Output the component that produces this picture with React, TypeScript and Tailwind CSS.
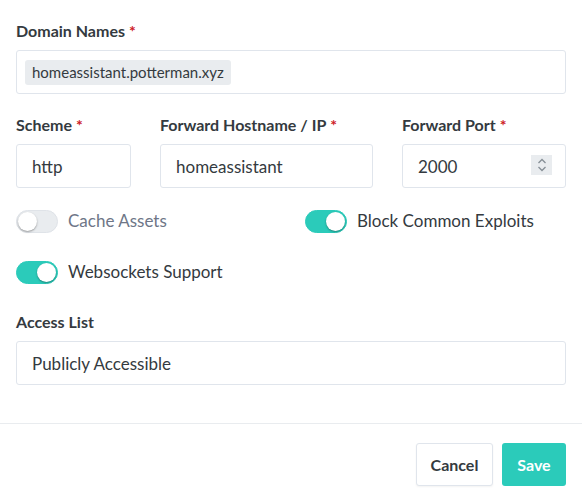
import { useState } from "react";

function Label({ text, required }: { text: string; required?: boolean }) {
  return (
    <label className="block text-[16px] font-bold text-[#343a40] mb-[9px] leading-[20px]">
      {text}
      {required && <span className="text-[#cd201f] ml-[4px]">*</span>}
    </label>
  );
}

function Toggle({ on, label, onChange }: { on: boolean; label: string; onChange: () => void }) {
  return (
    <button type="button" onClick={onChange} className="flex items-center gap-[10px] h-[22px]">
      <span
        className={
          on
            ? "relative w-[42px] h-[23px] rounded-full bg-[#2bcbba] border border-[#2bcbba]"
            : "relative w-[42px] h-[23px] rounded-full bg-[#e9ecef] border border-[#dfe3e8]"
        }
      >
        <span
          className={
            on
              ? "absolute top-[1px] right-[1px] w-[19px] h-[19px] rounded-full bg-white shadow-[0_1px_2px_rgba(0,0,0,0.35)]"
              : "absolute top-[1px] left-[1px] w-[19px] h-[19px] rounded-full bg-white shadow-[0_1px_2px_rgba(0,0,0,0.35)]"
          }
        />
      </span>
      <span className={on ? "text-[17px] text-[#343a40]" : "text-[17px] text-[#6e7687]"}>{label}</span>
    </button>
  );
}

export default function App() {
  const [cache, setCache] = useState(false);
  const [block, setBlock] = useState(true);
  const [ws, setWs] = useState(true);

  const input =
    "h-[44px] w-full rounded-[3px] border border-[#e0e5ec] px-[15px] text-[17px] text-[#343a40] bg-white outline-none";

  return (
    <div className="w-[582px] h-[500px] bg-white font-['Lato','Source_Sans_Pro',sans-serif]">
      <div className="px-[16px] pt-[21px]">
        <Label text="Domain Names" required />
        <div className="h-[44px] w-full rounded-[3px] border border-[#e0e5ec] flex items-center px-[8px]">
          <span className="h-[25px] flex items-center px-[7px] rounded-[3px] bg-[#e9ecef] text-[15px] text-[#343a40]">
            homeassistant.potterman.xyz
          </span>
        </div>

        <div className="grid grid-cols-[115px_213px_1fr] gap-x-[29px] mt-[21px]">
          <div>
            <Label text="Scheme" required />
            <input className={input} defaultValue="http" />
          </div>
          <div>
            <Label text="Forward Hostname / IP" required />
            <input className={input} defaultValue="homeassistant" />
          </div>
          <div>
            <Label text="Forward Port" required />
            <div className="relative">
              <input className={input} defaultValue="2000" />
              <span className="absolute right-[14px] top-[11px] w-[21px] h-[20px] bg-[#e9ecef] flex flex-col items-center justify-center">
                <svg width="10" height="16" viewBox="0 0 10 16" fill="none" stroke="#868e96" strokeWidth="1.3">
                  <path d="M1.5 6 L5 2.5 L8.5 6" />
                  <path d="M1.5 10 L5 13.5 L8.5 10" />
                </svg>
              </span>
            </div>
          </div>
        </div>

        <div className="grid grid-cols-[289px_1fr] mt-[22px]">
          <Toggle on={cache} label="Cache Assets" onChange={() => setCache(!cache)} />
          <Toggle on={block} label="Block Common Exploits" onChange={() => setBlock(!block)} />
        </div>
        <div className="mt-[29px]">
          <Toggle on={ws} label="Websockets Support" onChange={() => setWs(!ws)} />
        </div>

        <div className="mt-[29px]">
          <Label text="Access List" />
          <input className={input} defaultValue="Publicly Accessible" />
        </div>
      </div>

      <div className="mt-[38px] border-t border-[#e9ecef] flex justify-end gap-[9px] px-[16px] pt-[19px]">
        <button className="h-[43px] w-[77px] rounded-[3px] border border-[#e0e5ec] bg-white text-[16px] font-bold text-[#343a40] shadow-[0_1px_2px_rgba(0,0,0,0.05)]">
          Cancel
        </button>
        <button className="h-[43px] w-[64px] rounded-[3px] bg-[#2bcbba] text-[16px] font-bold text-white">
          Save
        </button>
      </div>
    </div>
  );
}
